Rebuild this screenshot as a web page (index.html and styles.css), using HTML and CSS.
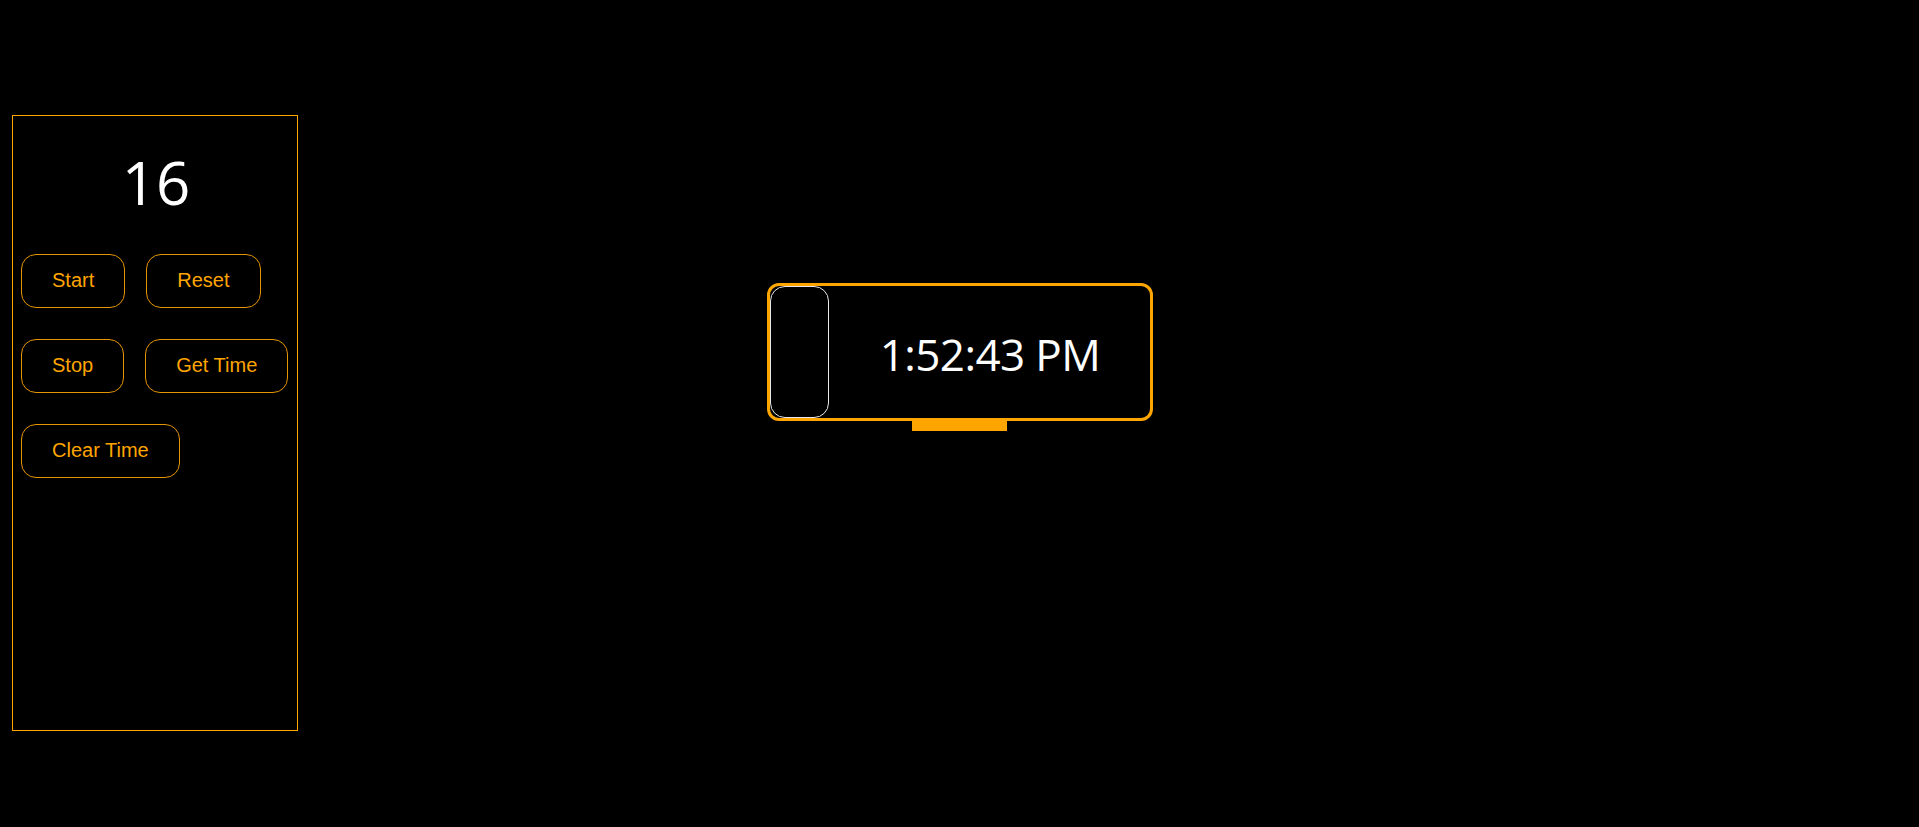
FILE: index.html
```html
<!DOCTYPE html>
<html lang="en">
<head>
<meta charset="utf-8">
<title>Timer</title>
<link rel="stylesheet" href="styles.css">
</head>
<body>
<div class="page">
  <section class="panel">
    <div class="counter">16</div>
    <div class="controls">
      <button class="btn">Start</button>
      <button class="btn">Reset</button>
      <button class="btn">Stop</button>
      <button class="btn">Get Time</button>
      <button class="btn">Clear Time</button>
    </div>
  </section>
  <main class="stage">
    <div class="clock">
      <div class="clock-body">
        <div class="clock-slot"></div>
        <div class="clock-time">1:52:43 PM</div>
      </div>
      <div class="clock-foot"></div>
    </div>
  </main>
  <div class="spacer"></div>
</div>
</body>
</html>
```
FILE: styles.css
```css
html, body {
  margin: 0;
  padding: 0;
  background: #000;
  height: 100%;
}

.page {
  display: grid;
  grid-template-columns: 298px 1fr 298px;
  align-items: start;
  min-height: 100%;
}

.panel {
  margin-left: 12px;
  margin-top: 115px;
  width: 286px;
  height: 616px;
  box-sizing: border-box;
  border: 1px solid #ffa500;
  padding: 25px 8px 0 8px;
}

.counter {
  font-family: "Open Sans", "Noto Sans", sans-serif;
  font-size: 60px;
  line-height: 82px;
  color: #fff;
  text-align: center;
  padding-left: 2px;
}

.controls {
  display: flex;
  flex-wrap: wrap;
  column-gap: 21px;
  row-gap: 31px;
  margin-top: 31px;
}

.btn {
  font-family: "Liberation Sans", Arial, sans-serif;
  font-size: 20px;
  line-height: 22px;
  color: #ffa500;
  background: #000;
  border: 1px solid #e69500;
  border-radius: 15px;
  padding: 14px 30px 16px;
  height: 54px;
  box-sizing: border-box;
  cursor: pointer;
}

.stage {
  display: flex;
  justify-content: center;
  padding-top: 283px;
}

.clock {
  display: flex;
  flex-direction: column;
  align-items: center;
}

.clock-body {
  width: 386px;
  height: 138px;
  box-sizing: border-box;
  border: 3px solid #ffa500;
  border-radius: 12px;
  display: flex;
  align-items: stretch;
}

.clock-slot {
  width: 59px;
  box-sizing: border-box;
  border: 1px solid #e8e8e8;
  border-radius: 15px;
}

.clock-time {
  flex: 1;
  display: flex;
  align-items: center;
  justify-content: center;
  font-family: "Open Sans", "Noto Sans", sans-serif;
  font-size: 44px;
  letter-spacing: -0.6px;
  color: #fff;
  padding-top: 4px;
  padding-left: 2px;
}

.clock-foot {
  width: 95px;
  height: 10px;
  background: #ffa500;
}
```
